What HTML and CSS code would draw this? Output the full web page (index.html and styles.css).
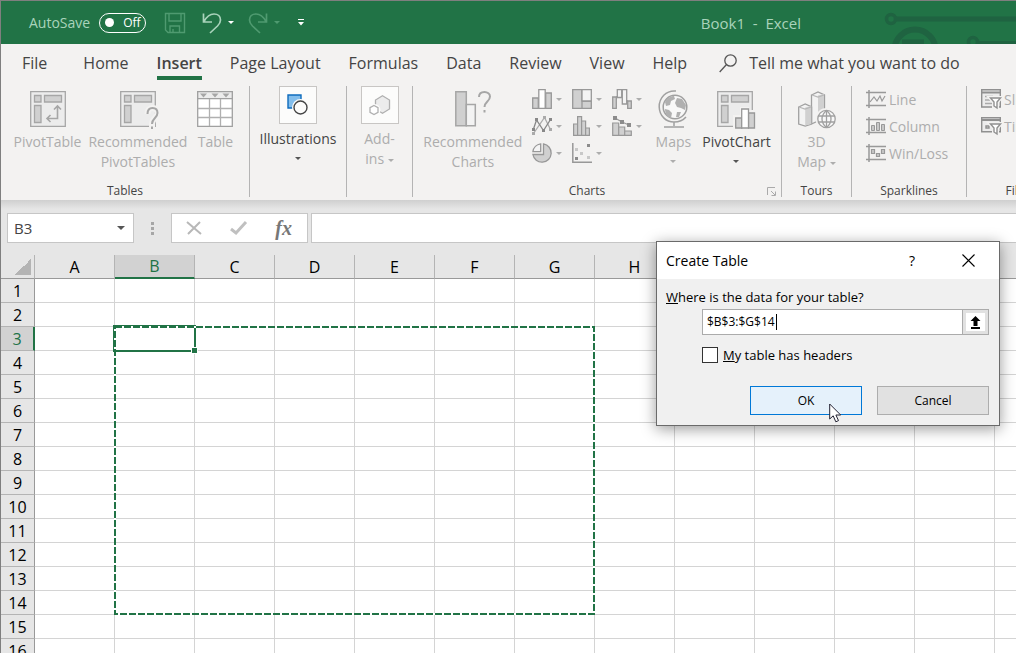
FILE: index.html
```html
<!DOCTYPE html>

<html lang="en">
<head>
    <meta charset="utf-8">
    <title>Book1 - Excel</title>
    <link rel="stylesheet" href="styles.css">
</head>

<body>

<div class="window">

<header class="titleBar">
    <div class="quickAccess">
        <span class="autoSave">AutoSave</span>
        <button class="toggle"><span class="knob"></span>Off</button>
        <button class="qa save" aria-label="Save">
            <svg width="22" height="22" viewBox="0 0 22 22" fill="none" stroke="#4f9a70" stroke-width="1.4"><path d="M1.5 1.5h19v19H4l-2.500-2.500zM5 1.500v7.500h12V1.500M6 20.500v-6.500h9.500v6.500M9 20v-3"/></svg>
        </button>
        <button class="qa" aria-label="Undo">
            <svg width="20" height="22" viewBox="0 0 20 22" fill="none" stroke="#a9d3bb" stroke-width="1.700"><path d="M1.500 1.500v8.500h8.500M2 9.500C5 4 8.500 2 12 2c4 0 6.500 2.500 6.500 6 0 2.500-1 4-3 6l-7.500 7"/></svg>
            <i class="arrow white"></i>
        </button>
        <button class="qa redo" aria-label="Redo">
            <svg width="20" height="22" viewBox="0 0 20 22" fill="none" stroke="#4f9a70" stroke-width="1.700"><path d="M18.500 1.500v8.500H10M18 9.500C15 4 11.500 2 8 2 4 2 1.500 4.500 1.500 8c0 2.500 1 4 3 6l7.500 7"/></svg>
            <i class="arrow faint"></i>
        </button>
        <button class="qa more" aria-label="Customize Quick Access Toolbar">
            <svg width="6" height="7" viewBox="0 0 6 7" fill="#fff"><path d="M0 0h6v1H0zM0 3h6L3 6.500z"/></svg>
        </button>
    </div>
    <div class="docName">Book1&nbsp; -&nbsp; Excel</div>
    <svg class="circuit" width="132" height="43" viewBox="0 0 132 43" fill="none" stroke="#1f6341">
        <circle cx="7" cy="18" r="4.500" stroke-width="3.500"/>
        <path d="M12 18h120" stroke-width="5"/>
        <circle cx="31" cy="49" r="20.500" stroke-width="6"/>
        <path d="M18 41h22" stroke-width="5"/>
        <circle cx="89" cy="41" r="4.500" stroke-width="3.500"/>
        <path d="M94 42h38" stroke-width="4"/>
    </svg>
</header>

<nav class="tabs">
    <a class="file" href="#">File</a>
    <a href="#">Home</a>
    <a class="active" href="#">Insert</a>
    <a href="#">Page Layout</a>
    <a href="#">Formulas</a>
    <a href="#">Data</a>
    <a href="#">Review</a>
    <a href="#">View</a>
    <a href="#">Help</a>
    <a class="tellMe" href="#"><svg width="18" height="19" viewBox="0 0 18 19" fill="none" stroke="#555" stroke-width="1.300"><circle cx="11.500" cy="6.500" r="5.700"/><path d="M7.500 10.500L.7 18"/></svg>Tell me what you want to do</a>
</nav>

<div class="ribbon">
    <section class="group tables">
        <div class="tools">
            <button class="big off">
                <svg width="36" height="40" viewBox="0 0 36 40" fill="#d0d0d0" stroke="#a6a6a6" stroke-width="1.300"><path fill="#ececec" d="M.7 1.700h34.600v34.600H.7z"/><path d="M4.500 5.500h6.500v6.500H4.500zM14.500 5.500h17v6.500h-17zM4.500 15.500h6.500v17H4.500z"/><path fill="none" stroke-width="1.600" d="M17 28.500h10.500V16M20.500 25L17 28.500l3.500 3.500M24 19.500l3.500-3.500 3.500 3.500"/></svg>
                PivotTable
            </button>
            <button class="big off">
                <svg width="36" height="40" viewBox="0 0 36 40" fill="#d0d0d0" stroke="#a6a6a6" stroke-width="1.300"><path fill="#ececec" d="M.7 1.700h34.600v34.600H.7z"/><path d="M4.500 5.500h6.500v6.500H4.500zM14.500 5.500h17v6.500h-17zM4.500 15.500h6.500v17H4.500z"/><path fill="none" stroke="#f3f2f1" stroke-width="6" d="M27.500 24c0-4 2-6 5-6s5 2 5 5c0 5-5.500 5-5.500 11v5"/><path fill="none" stroke-width="2" d="M27.500 24c0-4 2-6 5-6s5 2 5 5c0 5-5.500 5-5.500 11M32 36.500v2.500"/></svg>
                Recommended<br>PivotTables
            </button>
            <button class="big off">
                <svg width="36" height="40" viewBox="0 0 36 40" fill="none" stroke="#a0a0a0" stroke-width="1.300"><path fill="#fff" d="M.7 1.700h34.600v34.600H.7z"/><path fill="#ececec" d="M.7 1.700h34.600v7H.7z"/><path stroke="#b0b0b0" d="M.7 18.500h34.600M.7 27.500h34.600M12.500 9v27M23.500 9v27"/><path fill="#a6a6a6" stroke="none" d="M3 3.500h7L6.500 7.500zM14.500 3.500h7L18 7.500zM25.500 3.500h7L29 7.500z"/></svg>
                Table
            </button>
        </div>
        <h2>Tables</h2>
    </section>

    <section class="group illustrations">
        <div class="tools">
            <button class="big boxed">
                <span class="box"><svg width="22" height="22" viewBox="0 0 22 22"><path fill="#83beec" stroke="#0f6cbd" stroke-width="1.400" d="M1 1h13v13H1z"/><circle cx="13.500" cy="13.500" r="8.500" fill="#fcfcfb"/><circle cx="13.500" cy="13.500" r="6.500" fill="#fcfcfb" stroke="#444" stroke-width="1.400"/></svg></span>
                Illustrations
                <i class="arrow"></i>
            </button>
        </div>
    </section>

    <section class="group addIns">
        <div class="tools">
            <button class="big boxed off">
                <span class="box"><svg width="22" height="20" viewBox="0 0 22 20" fill="#ececec" stroke="#b0b0b0" stroke-width="1.300"><path d="M13.500.8l7 4.200v9l-7 4.200-7-4.200V5z"/><circle cx="5.500" cy="15" r="6" fill="#fcfcfb" stroke="none"/><path fill="#fff" d="M5 10.500l4 2.200v4.600l-4 2.200-4-2.200v-4.600z"/></svg></span>
                <span>Add-<br>ins <i class="arrow"></i></span>
            </button>
        </div>
    </section>

    <section class="group charts">
        <div class="tools">
            <button class="big off">
                <svg width="36" height="40" viewBox="0 0 36 40" fill="#d0d0d0" stroke="#a6a6a6" stroke-width="1.500"><path d="M.8 1.800h10.500v34H.8z"/><path fill="#f3f3f3" d="M11.300 14.500h9v21.300h-9z"/><path fill="none" stroke-width="2" d="M24 7c0-3.500 2.500-5 5.500-5s5.500 2 5.500 4.500c0 5-5.500 5-5.500 10.500M29.500 20v2.500"/></svg>
                Recommended<br>Charts
            </button>
            <div class="chartGrid">
                <button aria-label="Column chart"><svg width="20" height="20" viewBox="0 0 20 20" fill="#d0d0d0" stroke="#989898" stroke-width="1.300"><path d="M.7 9h5.600v10.300H.7zM13.700 4h5.600v15.300h-5.600z"/><path fill="#fff" d="M6.800.7h6.400v18.600H6.800z"/></svg><i class="arrow"></i></button>
                <button aria-label="Hierarchy chart"><svg width="20" height="20" viewBox="0 0 20 20" fill="#d0d0d0" stroke="#989898" stroke-width="1.300"><path d="M.7.7h9.300v18.600H.7zM10 12h9.300v7.300H10z"/><path fill="#f4f4f4" d="M10 .7h9.300V12H10z"/></svg><i class="arrow"></i></button>
                <button aria-label="Waterfall chart"><svg width="20" height="20" viewBox="0 0 20 20" fill="#d0d0d0" stroke="#989898" stroke-width="1.300"><path d="M.7 8h3.600v11.300H.7zM15.700 12h3.600v7.300h-3.600z"/><path fill="#f4f4f4" d="M5.300.7h4.400V8.500H5.300zM10.300.7h4.400v14.300h-4.400z"/><path fill="none" d="M4 8h2M14 12h2"/></svg><i class="arrow"></i></button>
                <button aria-label="Line chart"><svg width="20" height="20" viewBox="0 0 20 20" fill="none" stroke-width="1.300"><path stroke="#aaa" d="M1.500 17.500l11-16 6 12"/><path fill="#aaa" d="M0 16h3v3H0zM11 0h3v3h-3zM17 12h3v3h-3z"/><path stroke="#888" d="M1.500 13L4.500 4l7 10.500 7-11"/><path fill="#888" d="M0 12h3v3H0zM3 2h3v3H3zM10 13h3v3h-3zM17 2h3v3h-3z"/></svg><i class="arrow"></i></button>
                <button aria-label="Statistic chart"><svg width="20" height="20" viewBox="0 0 20 20" fill="#d0d0d0" stroke="#989898" stroke-width="1.200"><path d="M1.600 8h4v11.400h-4zM5.600.7h4v18.700h-4zM9.600 5h4v14.400h-4zM13.600 12h3.800v7.400h-3.800z"/></svg><i class="arrow"></i></button>
                <button aria-label="Combo chart"><svg width="20" height="20" viewBox="0 0 20 20" fill="#d0d0d0" stroke="#989898" stroke-width="1.200"><path d="M.7 7h6v12.400h-6zM6.700 11h6v8.400h-6zM12.700 15h6.600v4.400h-6.600z"/><path fill="none" d="M3 2l7 4 7 3"/><path fill="#8c8c8c" stroke="none" d="M1 0h4v4H1zM8 4h4v4H8zM15 7h4v4h-4z"/></svg><i class="arrow"></i></button>
                <button aria-label="Pie chart"><svg width="20" height="20" viewBox="0 0 20 20" fill="#d0d0d0" stroke="#989898" stroke-width="1.300"><path d="M11.500.9a9.200 9.200 0 1 1-10.600 10.600h10.600z"/><path fill="#f4f4f4" d="M8.700 8.700H.9A9 9 0 0 1 8.700.9z"/></svg><i class="arrow"></i></button>
                <button aria-label="Scatter chart"><svg width="20" height="20" viewBox="0 0 20 20"><path fill="none" stroke="#989898" stroke-width="1.500" d="M.8 0v19.200H20"/><path fill="#c8c8c8" d="M3 5h3v3H3zM8 9h3v3H8zM15 13h3v3h-3z"/><path fill="#8c8c8c" d="M3 14h3v3H3zM15 1h3v3h-3z"/></svg><i class="arrow"></i></button>
            </div>
            <button class="big off">
                <svg width="30" height="40" viewBox="0 0 30 40" fill="none" stroke="#a0a0a0" stroke-width="1.500"><path d="M18 1C8 0 1 8 1.200 17 1.500 26 8 32 16 32c5 0 9-1.500 12-5M16 32v4M6 37h20" /><circle cx="17" cy="17" r="11.800" fill="#f8f8f8"/><path fill="#b0b0b0" stroke="none" d="M7 12c2-4 6-6 9-6l1 3-4 2-1 4-4 1zM19 8l5 1 4 6-1 5-4-2-4-1-2-4zM7 19l4 1 3 3-1 5c-4-1-6-5-6-9zM19 22l4 0-2 5-3 0z"/></svg>
                Maps
                <i class="arrow"></i>
            </button>
            <button class="big">
                <svg width="38" height="40" viewBox="0 0 38 40" fill="#d0d0d0" stroke="#a6a6a6" stroke-width="1.300"><path fill="#ececec" d="M.7 1.700h34.600v34.600H.7z"/><path d="M4.500 5.500h6.500v6.500H4.500zM14.500 5.500h17v6.500h-17zM4.500 15.500h6.500v17H4.500z"/><path fill="#f3f2f1" stroke="none" d="M16 25h7v-8h9v3h6v20H16z"/><path stroke="#989898" d="M18.700 28h6v10h-6zM31.500 23h6v15h-6z"/><path fill="#fff" stroke="#989898" d="M24.700 19h6.800v19h-6.800z"/></svg>
                PivotChart
                <i class="arrow"></i>
            </button>
        </div>
        <h2>Charts</h2>
        <button class="launcher" aria-label="See all charts"><svg width="9" height="9" viewBox="0 0 9 9" fill="none" stroke="#aaa"><path d="M.5 8V.5H8M4 4l4 4M8.500 4.500v4h-4"/></svg></button>
    </section>

    <section class="group tours">
        <div class="tools">
            <button class="big off">
                <svg width="38" height="40" viewBox="0 0 38 40" fill="#d0d0d0" stroke="#a0a0a0" stroke-width="1.300"><path fill="#f3f3f3" d="M13.500 5l6.500-3 6.500 3v29L20 31l-6.500 3zM.7 17l6.500-3 6.500 3v17l-6.500 2-6.500-2z"/><path stroke="none" d="M20 5.500l6-1.500v28l-6-1zM7.200 17.500l6-1.500v18l-6 1.500z"/><path fill="none" stroke="#b8b8b8" d="M14 5l6 2 6-2M1 17l6 2 6-2"/><circle cx="28.500" cy="29" r="11" fill="#f3f2f1" stroke="none"/><circle cx="28.500" cy="29" r="8.700" fill="#f8f8f8"/><path fill="none" d="M20 26h17M20 32h17M28.500 20.500v17M28.500 20.500c-6 5-6 12 0 17M28.500 20.500c6 5 6 12 0 17"/></svg>
                <span>3D<br>Map <i class="arrow"></i></span>
            </button>
        </div>
        <h2>Tours</h2>
    </section>

    <section class="group sparklines">
        <div class="tools list">
            <button><svg width="20" height="18" viewBox="0 0 20 18" fill="none" stroke="#999" stroke-width="1.500"><path d="M0 2.500h20M0 15.500h20M3 0v18"/><path stroke-width="1.200" d="M4 12l4-5 3 4 3-5 2 5 3-5"/></svg>Line</button>
            <button><svg width="20" height="18" viewBox="0 0 20 18" fill="none" stroke="#999" stroke-width="1.500"><path d="M0 2.500h20M0 15.500h20M3 0v18"/><path fill="#c8c8c8" stroke-width="1" d="M5.500 8.500h3v5h-3zM10.500 5.500h3v8h-3zM15.500 7.500h3v6h-3z"/></svg>Column</button>
            <button><svg width="20" height="18" viewBox="0 0 20 18" fill="none" stroke="#999" stroke-width="1.500"><path d="M0 2.500h20M0 15.500h20M3 0v18"/><path fill="#c8c8c8" stroke-width="1.200" d="M5.500 5.500h3v4h-3zM10.500 9.500h3v3h-3zM15.500 5.500h3v4h-3z"/></svg>Win/Loss</button>
        </div>
        <h2>Sparklines</h2>
    </section>

    <section class="group filters">
        <div class="tools list">
            <button><svg width="20" height="20" viewBox="0 0 20 20" fill="none" stroke="#909090" stroke-width="1.400"><path fill="#ececec" d="M.7.7h18.600V18H.7z"/><path d="M0 3.500h20" stroke-width="2"/><path d="M4 7.500h8M4 11h5M4 14.500h8" stroke="#aaa"/><path fill="#fff" stroke="#f3f2f1" stroke-width="4" d="M9.500 9h10l-3.500 4v6h-3v-6z"/><path fill="#fff" d="M9.500 9h10l-3.500 4v6l-3-2v-4z"/></svg>Slicer</button>
            <button><svg width="20" height="18" viewBox="0 0 20 18" fill="none" stroke="#909090" stroke-width="1.400"><path fill="#ececec" d="M.7.7h18.600v14H.7z"/><path d="M0 3h20" stroke-width="2"/><path d="M5 9h3v2H5z"/><path fill="#fff" stroke="#f3f2f1" stroke-width="4" d="M9.500 7h10l-3.500 4v6h-3v-6z"/><path fill="#fff" d="M9.500 7h10l-3.500 4v6l-3-2v-4z"/></svg>Timeline</button>
        </div>
        <h2>Filters</h2>
    </section>
</div>

<div class="formulaBar">
    <div class="field nameBox"><input value="B3" aria-label="Name box"><i class="arrow"></i></div>
    <svg class="dots" width="3" height="13" viewBox="0 0 3 13" fill="#a6a6a6"><path d="M0 0h3v3H0zM0 5h3v3H0zM0 10h3v3H0z"/></svg>
    <div class="field actions">
        <button aria-label="Cancel entry"><svg width="16" height="14" viewBox="0 0 16 14" fill="none" stroke="#b8b8b8" stroke-width="2"><path d="M1 1l14 12M14 1L2 13"/></svg></button>
        <button aria-label="Enter"><svg width="17" height="14" viewBox="0 0 17 14" fill="none" stroke="#c0c0c0" stroke-width="3"><path d="M1 8l5 4L16 1"/></svg></button>
        <button class="fx">fx</button>
    </div>
    <div class="field formula"><input aria-label="Formula"></div>
</div>

<main class="sheet">
    <table>
        <thead><tr id="letters"><th class="corner"></th></tr></thead>
        <tbody id="rows"></tbody>
    </table>
    <div class="activeCell"></div>
    <svg class="ants" width="482" height="290" viewBox="0 0 482 290" fill="none" stroke-width="2">
        <rect x="1" y="1" width="479" height="287" stroke="#fff"/>
        <rect x="1" y="1" width="479" height="287" stroke="#217346" stroke-dasharray="7 2"/>
    </svg>
    <div class="fillHandle"></div>
</main>

<form class="dialog">
    <div class="dialogTitle">
        <span>Create Table</span>
        <button type="button" class="help" aria-label="Help">?</button>
        <button type="button" class="close" aria-label="Close"><svg width="13" height="13" viewBox="0 0 13 13" fill="none" stroke="#000" stroke-width="1.100"><path d="M.5.500l12 12M12.500.500l-12 12"/></svg></button>
    </div>
    <div class="dialogBody">
        <label for="range"><u>W</u>here is the data for your table?</label>
        <div class="rangeRow">
            <input id="range" value="$B$3:$G$14">
            <i class="caret"></i>
            <button type="button" aria-label="Collapse dialog"><svg width="11" height="13" viewBox="0 0 11 13"><path d="M5.500 0l5 5H7.500v5h-4V5H.5zM1 11h9v2H1z"/></svg></button>
        </div>
        <div class="checkRow">
            <input type="checkbox" id="headers">
            <label for="headers"><u>M</u>y table has headers</label>
        </div>
        <div class="dialogButtons">
            <button type="button" class="ok">OK</button>
            <button type="button">Cancel</button>
        </div>
    </div>
    <svg class="cursor" width="13" height="20" viewBox="0 0 13 20" fill="#fff" stroke="#223"><path d="M.7 1v15l3.500-3.200 2.600 6 2.700-1.200-2.600-5.600h4.800z"/></svg>
</form>

</div>

<script>

var letters = "ABCDEFGHIJKLM";
var rowCount = 16;

// Column headings
var head = document.getElementById('letters');
for (var i = 0; i < letters.length; i++){
    var th = document.createElement('th');
    th.textContent = letters[i];
    if (letters[i] == "B") th.className = "selected";
    head.appendChild(th);
}

// Numbered rows of empty cells
var body = document.getElementById('rows');
for (var r = 1; r <= rowCount; r++){
    var tr = body.insertRow();
    var num = document.createElement('th');
    num.textContent = r;
    if (r == 3) num.className = "selected";
    tr.appendChild(num);
    for (var c = 0; c < letters.length; c++) tr.insertCell();
}

</script>

</body>
</html>
```

FILE: styles.css
```css
*{
    box-sizing: border-box;
}
html, body{
    height: 100%;
}
body{
    margin: 0;
    overflow: hidden;
    font-family: "Open Sans", "Noto Sans", sans-serif;
    font-size: 14px;
    color: #444;
    background: #e6e6e6;
}
button, input{
    font: inherit;
    color: inherit;
    border: none;
    background: none;
    padding: 0;
    margin: 0;
}
svg{
    overflow: visible;
}
.window{
    position: relative;
    min-height: 100%;
    display: flex;
    flex-direction: column;
    border-left: 1px solid #7f7f7f;
    border-top: 1px solid #7f7f7f;
}
.arrow{
    display: inline-block;
    border: 3px solid transparent;
    border-top-color: #555;
    border-bottom: none;
    vertical-align: middle;
}
.arrow.white{
    border-top-color: #fff;
}
.arrow.faint{
    border-top-color: #4f9a70;
}

/* title bar */
.titleBar{
    display: flex;
    align-items: center;
    height: 43px;
    background: #217346;
    color: #a9d3bb;
    white-space: nowrap;
}
.quickAccess{
    flex: 1;
    display: flex;
    align-items: center;
    padding-left: 28px;
}
.toggle{
    display: flex;
    align-items: center;
    gap: 9px;
    width: 47px;
    height: 20px;
    margin-left: 9px;
    padding-left: 5px;
    border: 1px solid #fff;
    border-radius: 10px;
    color: #fff;
    font-size: 12px;
}
.knob{
    width: 9px;
    height: 9px;
    flex: none;
    border-radius: 50%;
    background: #fff;
}
.qa{
    display: flex;
    align-items: center;
    gap: 6px;
    margin-left: 16px;
}
.save{
    margin-left: 18px;
}
.redo{
    margin-left: 14px;
}
.more{
    margin-left: 18px;
}
.docName{
    font-size: 15px;
}
.circuit{
    margin-left: 83px;
    overflow: hidden;
}

/* tabs */
.tabs{
    display: flex;
    gap: 28px;
    height: 41px;
    padding: 4px 0 0 21px;
    background: #f3f2f1;
    font-size: 16px;
    line-height: 30px;
    white-space: nowrap;
}
.tabs a{
    color: #444;
    text-decoration: none;
}
.tabs .file{
    margin-right: 8px;
}
.tabs .active{
    height: 32px;
    font-weight: 600;
    border-bottom: 4px solid #217346;
}
.tabs .tellMe{
    display: flex;
    align-items: center;
    gap: 12px;
    height: 30px;
    margin-left: 4px;
}

/* ribbon */
.ribbon{
    display: flex;
    height: 115px;
    background: #f3f2f1;
    overflow: hidden;
}
.group{
    position: relative;
    flex: none;
    display: flex;
    flex-direction: column;
    justify-content: space-between;
    height: 111px;
    margin-top: 1px;
    border-right: 1px solid #b4b4b4;
}
.group.tables{
    min-width: 249px;
}
.group.illustrations{
    min-width: 97px;
}
.group.addIns{
    min-width: 66px;
}
.group.charts{
    min-width: 369px;
}
.group.tours{
    min-width: 70px;
}
.group.sparklines{
    min-width: 115px;
}
.group.filters{
    min-width: 112px;
}
.group h2{
    margin: 0;
    font-size: 12px;
    font-weight: normal;
    line-height: 12px;
    text-align: center;
}
/* leaves room for the launcher */
.group.charts h2{
    padding-right: 20px;
}
.tools{
    display: flex;
    justify-content: center;
    gap: 8px;
}
.tools button{
    color: #adadad;
    white-space: nowrap;
}
.tools .arrow{
    border-top-color: #adadad;
}
.big{
    display: flex;
    flex-direction: column;
    align-items: center;
    min-width: 42px;
    padding-top: 4px;
    line-height: 20px;
}
.tables .tools{
    gap: 7px;
}
.big > svg{
    margin-bottom: 2px;
}
.big > .arrow{
    margin-top: 8px;
}
.tools .big:not(.off){
    color: #444;
}
.big:not(.off) .arrow{
    border-top-color: #555;
}
.tools .boxed{
    padding-top: 0;
}
.box{
    display: flex;
    align-items: center;
    justify-content: center;
    width: 38px;
    height: 38px;
    margin-bottom: 5px;
    border: 1px solid #c8c6c4;
    background: #fcfcfb;
}
.chartGrid{
    display: grid;
    grid-template-columns: 40px 40px 32px;
    grid-auto-rows: 20px;
    gap: 7px 0;
    padding-top: 3px;
    margin-left: 2px;
}
.chartGrid button{
    display: flex;
    align-items: center;
    gap: 4px;
}
.launcher{
    position: absolute;
    right: 5px;
    bottom: 1px;
    line-height: 0;
}
.list{
    flex-direction: column;
    gap: 7px;
    padding: 3px 0 0 14px;
}
.list button{
    display: flex;
    align-items: center;
    gap: 3px;
    height: 20px;
}

/* formula bar */
.formulaBar{
    display: flex;
    align-items: center;
    height: 55px;
    padding: 1px 0 0 6px;
    background: linear-gradient(#cfcfcf, #e6e6e6 9px);
}
.field{
    display: flex;
    align-items: center;
    height: 30px;
    border: 1px solid #c6c6c6;
    background: #fff;
}
.nameBox{
    width: 127px;
    padding: 0 8px 0 6px;
}
.nameBox input{
    flex: 1;
    min-width: 0;
    font-size: 15px;
}
.nameBox .arrow{
    border-width: 4px 4px 0;
}
.dots{
    margin: 0 17px;
}
.actions{
    width: 137px;
    justify-content: space-between;
    padding: 0 15px 0 14px;
}
.actions button{
    display: flex;
}
.actions .fx{
    font: italic bold 20px "Liberation Serif", serif;
    color: #777;
}
.formula{
    flex: 1;
    margin-left: 3px;
    border-right: none;
}
.formula input{
    width: 100%;
}

/* sheet */
.sheet{
    position: relative;
    flex: 1;
    overflow: hidden;
    height: 0;
}
.sheet table{
    width: 1074px;
    table-layout: fixed;
    border-collapse: separate;
    border-spacing: 0;
    color: #000;
    font-size: 16px;
    line-height: 20px;
}
.sheet th, .sheet td{
    height: 24px;
    padding: 0;
    border-right: 1px solid #d4d4d4;
    border-bottom: 1px solid #d4d4d4;
    background: #fff;
    font-weight: normal;
}
.sheet th{
    background: #e6e6e6;
    border-color: #b4b4b4;
}
.sheet thead th{
    width: 80px;
    border-bottom-color: #999;
}
.sheet tbody th{
    border-right-color: #999;
}
.sheet thead .corner{
    width: 34px;
    background: linear-gradient(135deg, transparent 50%, #b4b4b4 50%) 14px 4px / 16px 16px no-repeat #e6e6e6;
}
.sheet th.selected{
    background: #d2d2d2;
    color: #217346;
}
.sheet thead th.selected{
    border-bottom: 2px solid #217346;
}
.sheet tbody th.selected{
    border-right: 2px solid #217346;
}
.activeCell{
    position: absolute;
    left: 112px;
    top: 70px;
    width: 83px;
    height: 27px;
    border: 2px solid #217346;
}
.ants{
    position: absolute;
    left: 113px;
    top: 71px;
}
.fillHandle{
    position: absolute;
    left: 190px;
    top: 92px;
    width: 7px;
    height: 7px;
    border: 1px solid #fff;
    background: #217346;
}

/* dialog */
.dialog{
    position: absolute;
    right: 16px;
    top: 240px;
    width: 344px;
    border: 1px solid #6a6a6a;
    background: #f0f0f0;
    box-shadow: 0 3px 14px rgba(0, 0, 0, 0.4);
    color: #000;
    font-size: 12px;
}
.dialogTitle{
    display: flex;
    align-items: center;
    height: 37px;
    padding: 0 24px 0 9px;
    background: #fff;
    font-size: 14px;
}
.dialogTitle span{
    flex: 1;
}
.close{
    display: flex;
    margin-left: 47px;
}
.dialogBody{
    padding: 10px 10px 10px 9px;
    line-height: 16px;
}
.dialogBody label{
    display: block;
    font-size: 13px;
}
.rangeRow{
    position: relative;
    display: flex;
    height: 26px;
    margin: 4px 0 0 36px;
    border: 1px solid #ababab;
    background: #fff;
}
.rangeRow input{
    flex: 1;
    min-width: 0;
    padding-left: 4px;
    outline: none;
}
.rangeRow button{
    display: flex;
    align-items: center;
    justify-content: center;
    width: 25px;
    border: 3px solid #e1e1e1;
    outline: 1px solid #ababab;
}
.caret{
    position: absolute;
    left: 73px;
    top: 4px;
    width: 1px;
    height: 16px;
    background: #000;
}
.checkRow{
    display: flex;
    align-items: center;
    gap: 5px;
    margin: 12px 0 0 36px;
}
.checkRow input{
    appearance: none;
    width: 16px;
    height: 16px;
    border: 1px solid #333;
    background: #fff;
}
.dialogButtons{
    display: flex;
    justify-content: flex-end;
    gap: 15px;
    margin-top: 23px;
}
.dialogButtons button{
    width: 112px;
    height: 29px;
    border: 1px solid #adadad;
    background: #e1e1e1;
}
.dialogButtons .ok{
    border-color: #0078d7;
    background: #e5f1fb;
}
.cursor{
    position: absolute;
    left: 172px;
    top: 161px;
}
```
